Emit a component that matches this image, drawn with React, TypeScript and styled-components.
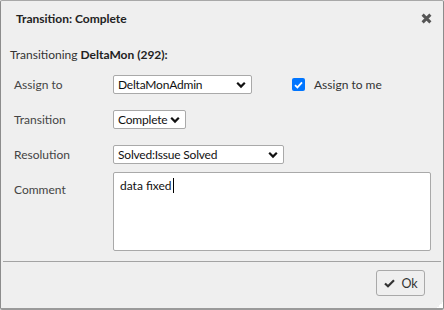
import React from "react";
import styled, { createGlobalStyle } from "styled-components";

const FONT = `"Lato", "Open Sans", sans-serif`;

const Global = createGlobalStyle`
  html, body { margin: 0; padding: 0; background: #efefef; }
  body { font-family: ${FONT}; font-size: 12px; color: #333; }
`;

const Dialog = styled.div`
  box-sizing: border-box;
  width: 444px;
  height: 310px;
  background: #efefef;
  border: 1px solid #a8a8a8;
  border-left-color: #8c8c8c;
  border-right-color: #8c8c8c;
  border-bottom: 2px solid #9a9a9a;
  border-radius: 2px;
  display: flex;
  flex-direction: column;
  position: relative;
`;

const TitleBar = styled.div`
  display: flex;
  align-items: center;
  justify-content: space-between;
  height: 34px;
  padding: 0 10px 0 15px;
`;

const Title = styled.div`
  font-weight: 700;
  font-size: 12px;
  color: #222;
`;

const CloseBtn = styled.div`
  width: 14px;
  height: 14px;
  display: flex;
  align-items: center;
  justify-content: center;
`;

const Body = styled.div`
  flex: 1;
  padding: 11px 12px 0 9px;
  display: flex;
  flex-direction: column;
`;

const Intro = styled.div`
  font-size: 12px;
  color: #333;
  margin-bottom: 5px;
  padding-top: 1px;
  b { color: #222; }
`;

const Row = styled.div<{ $top?: boolean; $h: number }>`
  display: grid;
  grid-template-columns: 99px 1fr;
  align-items: ${(p) => (p.$top ? "start" : "center")};
  min-height: ${(p) => p.$h}px;
  padding-left: 4px;
`;

const Label = styled.div<{ $pt?: number }>`
  color: #444;
  font-size: 12px;
  padding-top: ${(p) => p.$pt ?? 0}px;
`;

const Field = styled.div`
  display: flex;
  align-items: center;
`;

const Select = styled.div<{ $w: number }>`
  box-sizing: border-box;
  width: ${(p) => p.$w}px;
  height: 19px;
  background: #fff;
  border: 1px solid #a9a9a9;
  border-radius: 2px;
  display: flex;
  align-items: center;
  justify-content: space-between;
  padding: 0 5px 0 4px;
  font-size: 12px;
  letter-spacing: -0.2px;
  color: #111;
`;

const CheckWrap = styled.label`
  display: flex;
  align-items: center;
  margin-left: 40px;
  gap: 9px;
  color: #333;
  font-size: 12px;
`;

const Box = styled.span`
  width: 13px;
  height: 13px;
  border-radius: 2px;
  background: #0075ff;
  display: flex;
  align-items: center;
  justify-content: center;
`;

const TextArea = styled.div`
  box-sizing: border-box;
  width: 318px;
  height: 79px;
  background: #fff;
  border: 1px solid #a9a9a9;
  border-radius: 2px;
  padding: 5px 6px;
  font-size: 12px;
  color: #111;
  display: flex;
  align-items: flex-start;
`;

const Caret = styled.span`
  display: inline-block;
  width: 1px;
  height: 15px;
  background: #000;
  margin-left: 1px;
`;

const Separator = styled.div`
  height: 1px;
  background: #a3a3a3;
  margin: 0 2px;
`;

const Footer = styled.div`
  height: 46px;
  box-sizing: border-box;
  display: flex;
  align-items: flex-start;
  justify-content: flex-end;
  padding: 8px 18px 0 0;
`;

const OkButton = styled.button`
  box-sizing: border-box;
  width: 49px;
  height: 26px;
  border: 1px solid #a9a9a9;
  border-radius: 3px;
  background: #efefef;
  display: flex;
  align-items: center;
  justify-content: center;
  gap: 6px;
  font-family: ${FONT};
  font-size: 12.5px;
  color: #333;
  padding: 0 0 0 1px;
`;

const Grip = styled.div`
  position: absolute;
  right: 0;
  bottom: 0;
  width: 6px;
  height: 6px;
  background: linear-gradient(135deg, transparent 50%, #fff 50%);
`;

const Chevron = () => (
  <svg width="10" height="8" viewBox="0 0 10 8">
    <path d="M1.2 1.8 L5 5.6 L8.8 1.8" fill="none" stroke="#111" strokeWidth="2.2" />
  </svg>
);

export default function App() {
  return (
    <>
      <Global />
      <Dialog>
        <TitleBar>
          <Title>Transition: Complete</Title>
          <CloseBtn>
            <svg width="11" height="11" viewBox="0 0 11 11">
              <path d="M1.6 1.6 L9.4 9.4 M9.4 1.6 L1.6 9.4" stroke="#555" strokeWidth="3" />
            </svg>
          </CloseBtn>
        </TitleBar>
        <Body>
          <Intro>
            Transitioning <b>DeltaMon (292):</b>
          </Intro>
          <Row $h={35}>
            <Label>Assign to</Label>
            <Field>
              <Select $w={139}>
                <span>DeltaMonAdmin</span>
                <Chevron />
              </Select>
              <CheckWrap>
                <Box>
                  <svg width="9" height="8" viewBox="0 0 9 8">
                    <path d="M1 4.2 L3.4 6.4 L8 1.4" fill="none" stroke="#fff" strokeWidth="1.8" />
                  </svg>
                </Box>
                Assign to me
              </CheckWrap>
            </Field>
          </Row>
          <Row $h={35}>
            <Label>Transition</Label>
            <Field>
              <Select $w={73}>
                <span>Complete</span>
                <Chevron />
              </Select>
            </Field>
          </Row>
          <Row $h={35}>
            <Label>Resolution</Label>
            <Field>
              <Select $w={171}>
                <span>Solved:Issue Solved</span>
                <Chevron />
              </Select>
            </Field>
          </Row>
          <Row $top $h={84}>
            <Label $pt={10}>Comment</Label>
            <TextArea>
              data fixed<Caret />
            </TextArea>
          </Row>
        </Body>
        <Separator />
        <Footer>
          <OkButton>
            <svg width="11" height="9" viewBox="0 0 11 9">
              <path d="M1 4.5 L4 7.3 L10 1.3" fill="none" stroke="#333" strokeWidth="2.2" />
            </svg>
            Ok
          </OkButton>
        </Footer>
        <Grip />
      </Dialog>
    </>
  );
}
